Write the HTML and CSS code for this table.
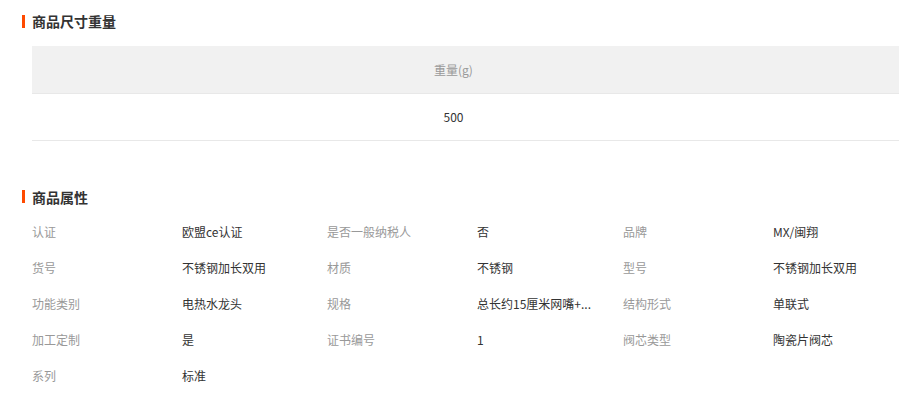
FILE: index.html
```html
<!DOCTYPE html>
<html lang="zh-CN">
<head>
<meta charset="utf-8">
<title>商品属性</title>
<link rel="stylesheet" href="styles.css">
</head>
<body>
<div class="page">
  <section class="block">
    <h2 class="title">商品尺寸重量</h2>
    <table class="size-table">
      <thead><tr><th>重量(g)</th></tr></thead>
      <tbody><tr><td>500</td></tr></tbody>
    </table>
  </section>
  <section class="block block-attrs">
    <h2 class="title">商品属性</h2>
    <div class="attrs">
      <div class="k">认证</div><div class="v">欧盟ce认证</div>
      <div class="k">是否一般纳税人</div><div class="v">否</div>
      <div class="k">品牌</div><div class="v">MX/闽翔</div>
      <div class="k">货号</div><div class="v">不锈钢加长双用</div>
      <div class="k">材质</div><div class="v">不锈钢</div>
      <div class="k">型号</div><div class="v">不锈钢加长双用</div>
      <div class="k">功能类别</div><div class="v">电热水龙头</div>
      <div class="k">规格</div><div class="v">总长约15厘米网嘴+...</div>
      <div class="k">结构形式</div><div class="v">单联式</div>
      <div class="k">加工定制</div><div class="v">是</div>
      <div class="k">证书编号</div><div class="v">1</div>
      <div class="k">阀芯类型</div><div class="v">陶瓷片阀芯</div>
      <div class="k">系列</div><div class="v">标准</div>
    </div>
  </section>
</div>
</body>
</html>
```
FILE: styles.css
```css
* { box-sizing: border-box; }
html, body { margin: 0; padding: 0; background: #fff; }
body {
  font-family: "Microsoft YaHei", "Noto Sans CJK SC", "Noto Sans", sans-serif;
  font-size: 12px;
  color: #333;
  overflow: hidden;
}
.page { padding-top: 14px; }
.title {
  display: flex;
  align-items: center;
  gap: 7px;
  margin: 0 0 0 22px;
  height: 14px;
  font-size: 14px;
  line-height: 14px;
  font-weight: bold;
  color: #333;
}
.title::before {
  content: "";
  width: 3px;
  height: 13px;
  background: #ff4a00;
}
.size-table {
  margin: 18px 0 0 32px;
  width: calc(100% - 32px);
  border-collapse: collapse;
}
.size-table th,
.size-table td {
  height: 47px;
  padding: 0 24px 0 0;
  text-align: center;
  font-weight: normal;
  border-bottom: 1px solid #e8e8e8;
}
.size-table th { background: #f1f1f1; color: #999; }
.size-table td { color: #333; }
.block-attrs { margin-top: 49px; }
.attrs {
  display: grid;
  grid-template-columns: 150px 145px 150px 146px 150px 146px;
  grid-auto-rows: 36px;
  align-items: center;
  margin: 10px 0 0 32px;
  width: 887px;
}
.k { color: #999; white-space: nowrap; }
.v { color: #333; white-space: nowrap; }
```
